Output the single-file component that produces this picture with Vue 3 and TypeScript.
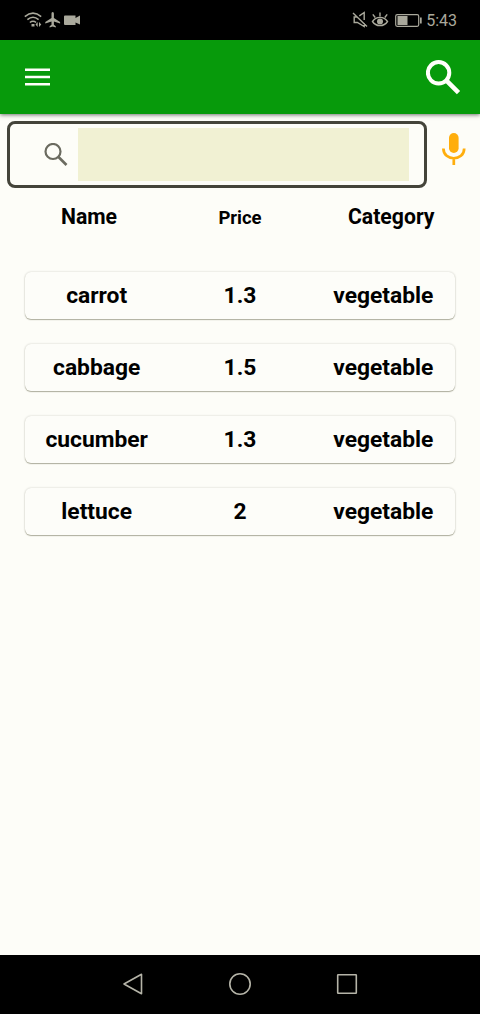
<script setup lang="ts">
import { ref } from 'vue'

interface Product {
  name: string
  price: string
  category: string
}

const query = ref('')
const products: Product[] = [
  { name: 'carrot', price: '1.3', category: 'vegetable' },
  { name: 'cabbage', price: '1.5', category: 'vegetable' },
  { name: 'cucumber', price: '1.3', category: 'vegetable' },
  { name: 'lettuce', price: '2', category: 'vegetable' },
]
</script>

<template>
  <div class="screen">
    <div class="status">
      <svg class="status-left" width="58" height="18" viewBox="0 0 58 18">
        <g fill="none" stroke="#aaa99c" stroke-width="1.6">
          <path d="M.8 5.600Q9-1.200 17.200 5.600" />
          <path d="M3.400 8.700Q9 3.800 14.600 8.700" />
          <path d="M5.900 11.500Q9 9 12.100 11.500" />
        </g>
        <g fill="#aaa99c">
          <path d="M7.500 13h3v2.500h-3zM11.500 13.500l2.200-2.500v5zM15 11l2.300 2.500L15 16z" />
          <path d="M28.700 1c.8 0 1.200.8 1.200 1.800v4.300l6.200 3.800v1.700l-6.200-2v3.200l1.900 1.400v1.200l-3.100-.9-3.100.9v-1.200l1.900-1.400v-3.200l-6.200 2v-1.700l6.200-3.800V2.800c0-1 .4-1.800 1.200-1.800z" />
          <path d="M41 4.500h10.500v2.500l4.500-2.400v8.800L51.500 11.500V14H41a1 1 0 0 1-1-1V5.500a1 1 0 0 1 1-1z" />
        </g>
      </svg>
      <div class="status-right">
        <svg width="70" height="18" viewBox="0 0 70 18">
          <g fill="none" stroke="#aaa99c" stroke-width="1.4">
            <path d="M1 2l14 13.500M5.500 6H2.200v5.500h3.200l6.800 4v-3.500M7.300 4.900l4.900-3.400V9" />
            <path d="M20.500 10.500c3.600-5.500 11.400-5.500 15 0-3.600 5.500-11.400 5.500-15 0z" />
            <circle cx="28" cy="10.500" r="2.300" fill="#aaa99c" />
            <path d="M28 5.500V1.500M23.200 6.500L20.800 3.300M32.800 6.500L35.200 3.300" />
            <rect x="43.700" y="3.700" width="23" height="11.600" rx="1.500" stroke-width="1.200" />
          </g>
          <path d="M45.500 5h10v9h-10zM68 6.500h1.700v6H68z" fill="#aaa99c" />
        </svg>
        <span class="clock">5:43</span>
      </div>
    </div>

    <header class="toolbar">
      <svg width="25" height="18" viewBox="0 0 25 18">
        <path d="M0 1.700h25M0 9h25M0 16.300h25" stroke="#fffffa" stroke-width="2.600" />
      </svg>
      <svg width="35" height="35" viewBox="0 0 35 35">
        <circle cx="12.600" cy="12.800" r="10.700" fill="none" stroke="#fffffa" stroke-width="4" />
        <path d="M20.500 20.700l12 12" stroke="#fffffa" stroke-width="4.600" />
      </svg>
    </header>

    <div class="search-row">
      <div class="search-box">
        <svg width="24" height="24" viewBox="0 0 24 24">
          <circle cx="9" cy="8.500" r="7.500" fill="none" stroke="#6b6b60" stroke-width="2.200" />
          <path d="M14.500 14l8 8" stroke="#6b6b60" stroke-width="2.700" />
        </svg>
        <input v-model="query" class="field" type="text" aria-label="Search" />
      </div>
      <svg class="mic" width="24" height="33" viewBox="0 0 24 33">
        <rect x="7" y="0" width="9.600" height="20" rx="4.800" fill="#ffae0d" />
        <path d="M1.400 15.500c0 13 20.800 13 20.800 0M11.800 25v7" fill="none" stroke="#ffae0d" stroke-width="2.700" />
      </svg>
    </div>

    <div class="heads">
      <span class="head-name">Name</span>
      <span class="head-price">Price</span>
      <span class="head-category">Category</span>
    </div>

    <main class="list">
      <div v-for="product in products" :key="product.name" class="card">
        <span>{{ product.name }}</span>
        <span>{{ product.price }}</span>
        <span>{{ product.category }}</span>
      </div>
    </main>

    <nav class="nav">
      <svg width="24" height="24" viewBox="0 0 24 24">
        <path d="M20.500 2.300v19.400L3 12z" fill="none" stroke="#b5b4a8" stroke-width="1.600" stroke-linejoin="round" />
      </svg>
      <svg width="24" height="24" viewBox="0 0 24 24">
        <circle cx="12" cy="12" r="10.200" fill="none" stroke="#b5b4a8" stroke-width="1.600" />
      </svg>
      <svg width="24" height="24" viewBox="0 0 24 24">
        <rect x="2.700" y="2.700" width="18.600" height="18.600" rx=".5" fill="none" stroke="#b5b4a8" stroke-width="1.600" />
      </svg>
    </nav>
  </div>
</template>

<style>
body {
  margin: 0;
}
</style>

<style scoped>
.screen {
  display: flex;
  flex-direction: column;
  width: 480px;
  height: 1014px;
  overflow: hidden;
  background: #fdfdf8;
  color: #000;
  font-family: Roboto, "Liberation Sans", sans-serif;
}
.status {
  display: flex;
  justify-content: space-between;
  height: 40px;
  box-sizing: border-box;
  padding: 11px 23px 0 24px;
  background: #000;
  color: #aaa99c;
}
.status-right {
  display: flex;
  gap: 4px;
}
.clock {
  font-size: 16px;
  line-height: 20px;
}
.toolbar {
  display: flex;
  align-items: center;
  justify-content: space-between;
  height: 74px;
  flex: none;
  box-sizing: border-box;
  padding: 0 19px 0 25px;
  background: #079a0b;
  box-shadow: 0 1px 4px rgba(0, 0, 0, 0.55);
}
.search-row {
  display: flex;
  height: 67px;
  margin-top: 7px;
  padding-left: 7px;
}
.search-box {
  display: flex;
  align-items: center;
  width: 420px;
  box-sizing: border-box;
  padding-left: 34px;
  border: 3px solid #44443a;
  border-radius: 8px;
}
.field {
  width: 331px;
  height: 53px;
  box-sizing: border-box;
  margin-left: 10px;
  padding: 0 8px;
  border: 0;
  outline: 0;
  background: #f1f1d3;
  font: 18px Roboto, sans-serif;
}
.mic {
  margin: 12px 0 0 14.5px;
}
.heads {
  display: grid;
  grid-template-columns: 178px 124px 178px;
  align-items: baseline;
  justify-items: center;
  height: 58px;
  box-sizing: border-box;
  padding-top: 16px;
  font-size: 21.2px;
  line-height: 25px;
  font-weight: 700;
}
.head-price {
  font-size: 18.5px;
}
.head-category {
  justify-self: start;
  margin-left: 46px;
}
.list {
  display: flex;
  flex: 1;
  flex-direction: column;
  gap: 25px;
  padding: 26px 25px 0;
}
.card {
  display: grid;
  grid-template-columns: repeat(3, 1fr);
  align-items: center;
  justify-items: center;
  height: 47px;
  box-sizing: border-box;
  padding-bottom: 1px;
  border-radius: 6px;
  background: #fdfdf9;
  box-shadow: 0 0 2px rgba(60, 60, 40, 0.25), 0 1px 1px rgba(60, 60, 20, 0.35);
  font-size: 22.8px;
  font-weight: 700;
}
.nav {
  display: flex;
  justify-content: center;
  gap: 83px;
  align-items: center;
  height: 59px;
  box-sizing: border-box;
  padding-bottom: 2px;
  background: #000;
}
</style>
